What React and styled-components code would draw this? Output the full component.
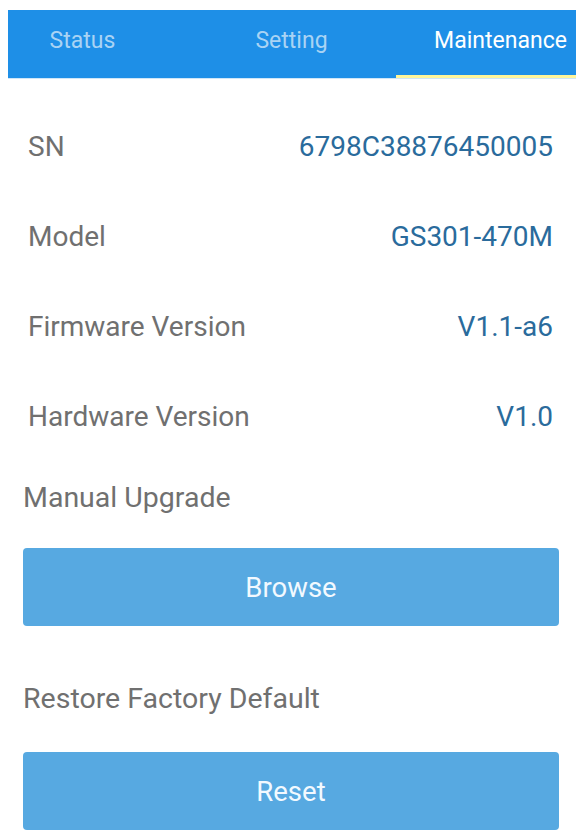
import React from "react";
import styled, { createGlobalStyle } from "styled-components";

const GlobalStyle = createGlobalStyle`
  html, body {
    margin: 0;
    padding: 0;
    background: #ffffff;
  }
  body {
    font-family: Roboto, "Noto Sans", Arial, sans-serif;
  }
`;

const Page = styled.div`
  width: 586px;
  height: 838px;
  overflow: hidden;
  padding-top: 10px;
  box-sizing: border-box;
`;

const TabBar = styled.div`
  margin: 0 10px 0 8px;
  height: 68px;
  background: #1e8fe7;
  overflow: hidden;
  border-bottom: 1px solid #cfe6f8;
`;

const TabTrack = styled.div`
  display: flex;
  height: 100%;
  margin-left: -30px;
`;

const Tab = styled.div`
  flex: 0 0 209px;
  display: flex;
  align-items: center;
  justify-content: center;
  padding-bottom: 4px;
  box-sizing: border-box;
  font-size: 23px;
  color: ${(p) => (p.$active ? "#ffffff" : "#a9d3f4")};
  border-bottom: 3px solid ${(p) => (p.$active ? "#fff59a" : "transparent")};
`;

const InfoList = styled.div`
  margin-top: 22px;
  padding: 0 33px 0 28px;
`;

const InfoRow = styled.div`
  height: 90px;
  display: flex;
  align-items: center;
  justify-content: space-between;
  font-size: 28px;
`;

const Label = styled.span`
  color: #707070;
`;

const Value = styled.span`
  color: #2a6b9c;
`;

const Section = styled.div`
  padding: 0 27px 0 23px;
`;

const SectionTitle = styled.div`
  height: 40px;
  display: flex;
  align-items: center;
  font-size: 28.5px;
  color: #707070;
  margin-top: ${(p) => p.$top}px;
`;

const ActionButton = styled.button`
  display: flex;
  align-items: center;
  justify-content: center;
  width: 100%;
  height: 78px;
  margin-top: ${(p) => p.$gap}px;
  border: none;
  border-radius: 4px;
  background: #57a9e1;
  color: #f2f9ff;
  font-family: inherit;
  font-size: 27.5px;
  padding: 0;
`;

const info = [
  ["SN", "6798C38876450005"],
  ["Model", "GS301-470M"],
  ["Firmware Version", "V1.1-a6"],
  ["Hardware Version", "V1.0"],
];

export default function App() {
  return (
    <Page>
      <GlobalStyle />
      <TabBar>
        <TabTrack>
          <Tab>Status</Tab>
          <Tab>Setting</Tab>
          <Tab $active>Maintenance</Tab>
        </TabTrack>
      </TabBar>
      <InfoList>
        {info.map(([label, value]) => (
          <InfoRow key={label}>
            <Label>{label}</Label>
            <Value>{value}</Value>
          </InfoRow>
        ))}
      </InfoList>
      <Section>
        <SectionTitle $top={16}>Manual Upgrade</SectionTitle>
        <ActionButton $gap={31}>Browse</ActionButton>
        <SectionTitle $top={52}>Restore Factory Default</SectionTitle>
        <ActionButton $gap={34}>Reset</ActionButton>
      </Section>
    </Page>
  );
}
